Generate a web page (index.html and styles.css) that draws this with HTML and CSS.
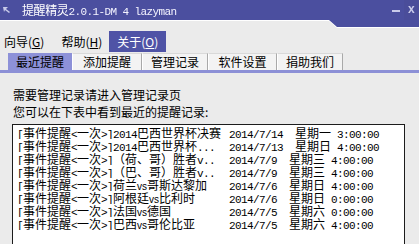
FILE: index.html
```html
<!DOCTYPE html>
<html lang="zh-CN">
<head>
<meta charset="utf-8">
<title>提醒精灵</title>
<link rel="stylesheet" href="styles.css">
</head>
<body>
<div class="window">
  <div class="titlewrap">
    <div class="titlebar">
      <svg class="appicon" viewBox="0 0 8 8" width="8" height="8"><polygon points="0,1 5,1 3,3 7,6 6,7 2,4 1,6" fill="#c9cbe9"/></svg>
      <span class="title">提醒精灵<span class="a">2.0.1-DM 4 lazyman</span></span>
      <span class="spacer"></span>
      <span class="tbtn min"></span>
      <span class="tbtn close">x</span>
    </div>
  </div>

  <div class="menubar">
    <span class="menu first">向导(<u>G</u>)</span>
    <span class="menu">帮助(<u>H</u>)</span>
    <span class="menu open">关于(<u>O</u>)</span>
  </div>

  <div class="tabs">
    <span class="tab active w64">最近提醒</span>
    <span class="tab w70">添加提醒</span>
    <span class="tab w66">管理记录</span>
    <span class="tab w69">软件设置</span>
    <span class="tab w66">捐助我们</span>
  </div>
  <div class="tabline"></div>

  <div class="content">
    <p class="label">需要管理记录请进入管理记录页</p>
    <p class="label">您可以在下表中看到最近的提醒记录:</p>
    <div class="listbox">
      <div class="row"><span class="name"><span class="a">[</span>事件提醒<span class="a">&lt;</span>一次<span class="a">&gt;]2014</span>巴西世界杯决赛</span><span class="when"><span class="a">2014/7/14  </span>星期一<span class="a"> 3:00:00</span></span></div>
      <div class="row"><span class="name"><span class="a">[</span>事件提醒<span class="a">&lt;</span>一次<span class="a">&gt;]2014</span>巴西世界杯<span class="a">...</span></span><span class="when"><span class="a">2014/7/13  </span>星期日<span class="a"> 4:00:00</span></span></div>
      <div class="row"><span class="name"><span class="a">[</span>事件提醒<span class="a">&lt;</span>一次<span class="a">&gt;]</span>（荷、哥）胜者<span class="a">v..</span></span><span class="when"><span class="a">2014/7/9  </span>星期三<span class="a"> 4:00:00</span></span></div>
      <div class="row"><span class="name"><span class="a">[</span>事件提醒<span class="a">&lt;</span>一次<span class="a">&gt;]</span>（巴、哥）胜者<span class="a">v..</span></span><span class="when"><span class="a">2014/7/9  </span>星期三<span class="a"> 4:00:00</span></span></div>
      <div class="row"><span class="name"><span class="a">[</span>事件提醒<span class="a">&lt;</span>一次<span class="a">&gt;]</span>荷兰<span class="vs">vs</span>哥斯达黎加</span><span class="when"><span class="a">2014/7/6  </span>星期日<span class="a"> 4:00:00</span></span></div>
      <div class="row"><span class="name"><span class="a">[</span>事件提醒<span class="a">&lt;</span>一次<span class="a">&gt;]</span>阿根廷<span class="vs">vs</span>比利时</span><span class="when"><span class="a">2014/7/6  </span>星期日<span class="a"> 0:00:00</span></span></div>
      <div class="row"><span class="name"><span class="a">[</span>事件提醒<span class="a">&lt;</span>一次<span class="a">&gt;]</span>法国<span class="vs">vs</span>德国</span><span class="when"><span class="a">2014/7/5  </span>星期六<span class="a"> 0:00:00</span></span></div>
      <div class="row"><span class="name"><span class="a">[</span>事件提醒<span class="a">&lt;</span>一次<span class="a">&gt;]</span>巴西<span class="vs">vs</span>哥伦比亚</span><span class="when"><span class="a">2014/7/5  </span>星期六<span class="a"> 4:00:00</span></span></div>
    </div>
  </div>
</div>
</body>
</html>
```

FILE: styles.css
```css
* { box-sizing: border-box; margin: 0; padding: 0; }

html, body {
  width: 419px;
  height: 244px;
  overflow: hidden;
}

body {
  background: #ebebeb;
  font-family: "Noto Sans CJK SC", "Liberation Sans", sans-serif;
  font-size: 12px;
  color: #000;
}

.window {
  display: flex;
  flex-direction: column;
  height: 244px;
}

.a {
  font-family: "Liberation Mono", monospace;
  font-size: 11px;
  letter-spacing: -0.6px;
}

/* title bar */
.titlewrap {
  filter: drop-shadow(0 1px 0 #ffffff);
}

.titlebar {
  height: 27px;
  background: #4b4f9f;
  clip-path: polygon(0 0, 100% 0, 100% 27px, 337px 27px, 329px 20px, 0 20px);
  display: flex;
  align-items: flex-start;
  color: #fff;
}

.appicon {
  margin: 6px 0 0 3px;
  flex: none;
}

.title {
  margin-left: 11px;
  line-height: 20px;
  font-size: 12px;
  letter-spacing: -0.4px;
  white-space: pre;
}

.title .a {
  font-size: 11px;
  letter-spacing: -0.6px;
  color: #f4f4ff;
}

.spacer { flex: 1; }

.tbtn {
  height: 20px;
  line-height: 18px;
  color: #c9cbea;
  font-family: "Liberation Sans", sans-serif;
}

.min {
  width: 8px;
  margin-right: 4px;
  position: relative;
}

.min::after {
  content: "";
  display: block;
  margin-top: 10px;
  height: 2px;
  background: #c9cbea;
}

.close {
  width: 15px;
  padding-left: 4px;
  font-size: 12px;
  font-weight: bold;
  background: #4a4d9a;
}

/* menu */
.menubar {
  margin-top: 4px;
  height: 21px;
  display: flex;
}

.menu {
  line-height: 21px;
  padding: 0 7px;
  white-space: nowrap;
}

.menu.first {
  padding: 0 10px 0 4px;
}

.menu.open {
  background: #4f53a6;
  color: #fff;
  padding: 0 8px;
  width: 57px;
}

.menu u {
  text-underline-offset: 1px;
}

/* tabs */
.tabs {
  display: flex;
  align-items: flex-end;
  height: 18px;
  padding-left: 8px;
}

.tab {
  height: 17px;
  line-height: 16px;
  text-align: center;
  background: #f3f3f3;
  border-top: 1px solid #d9d9d9;
  border-left: 1px solid #ffffff;
  border-right: 1px solid #a9a9a9;
}

.tab.active {
  background: #8d91d8;
  border: none;
  line-height: 17px;
}

.w64 { width: 64px; }
.w70 { width: 70px; }
.w66 { width: 66px; }
.w69 { width: 69px; }

.tabline {
  height: 3px;
  background: #8c90d6;
}

/* content */
.content {
  flex: 1;
  display: flex;
  flex-direction: column;
  padding-top: 13px;
}

.label {
  line-height: 17px;
  padding-left: 13px;
}

.listbox {
  flex: 1;
  margin: 4px 14px 0 12px;
  background: #fff;
  border: 1px solid #1c1c1c;
  border-bottom: none;
  padding: 1px 0 0 4px;
}

.row {
  height: 13px;
  line-height: 13px;
  white-space: nowrap;
  display: flex;
}

.name {
  width: 204px;
  overflow: hidden;
  margin-right: 8px;
  flex: none;
}

.when {
  white-space: pre;
}

.vs {
  font-family: "Liberation Sans", sans-serif;
  font-size: 10px;
}
```
